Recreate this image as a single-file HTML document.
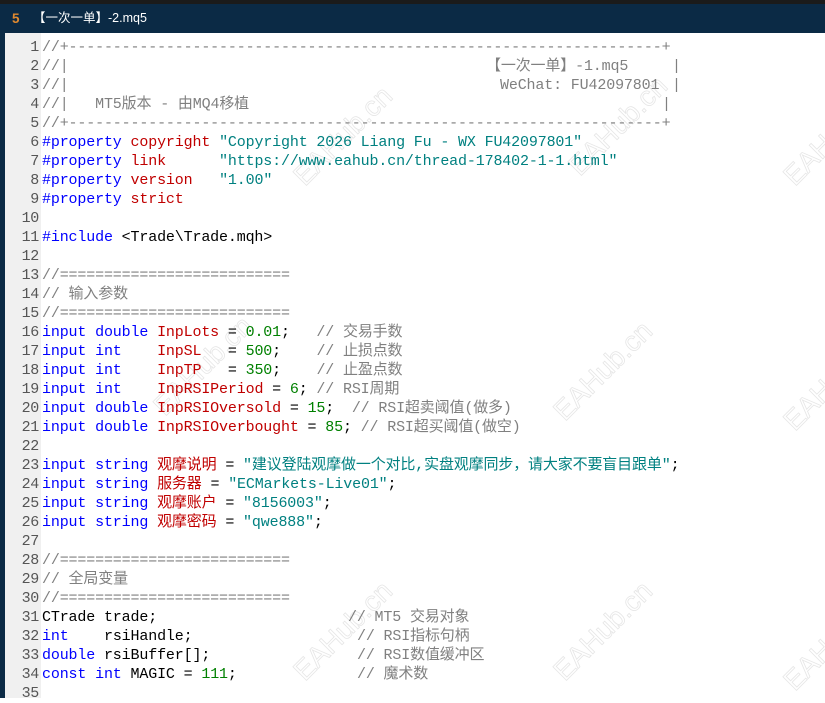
<!DOCTYPE html>
<html><head><meta charset="utf-8"><style>
body{margin:0;width:825px;height:698px;overflow:hidden;background:#fff;position:relative;font-family:"Liberation Mono","Noto Sans CJK SC",monospace;}
#top{position:absolute;left:0;top:0;width:825px;height:4px;background:#1b1b1b}
#title{position:absolute;left:0;top:4px;width:825px;height:29px;background:#0b2a45;color:#fff;font:12.5px "Liberation Sans","Noto Sans CJK SC",sans-serif;line-height:29px}
#title b{color:#e0892f;position:absolute;left:12px;font-size:13.5px}
#title span{position:absolute;left:33px}
#side{position:absolute;left:0;top:33px;width:5px;height:665px;background:#0b2a45}
#gut{position:absolute;left:5px;top:33px;width:36px;height:665px;background:#f0f0f0}
.l{position:absolute;left:0;height:19px;line-height:19px;font-size:15px;letter-spacing:-0.15px;white-space:pre;width:825px}
.n{position:absolute;left:5px;width:34px;text-align:right;color:#555;letter-spacing:-0.3px}
.c{position:absolute;left:42px}
.a{position:absolute}
.cm{color:#808080}.k{color:#0000ff}.r{color:#c00000}.g{color:#008000}.s{color:#008080}
.wm{position:absolute;color:transparent;-webkit-text-stroke:0.8px #e6e6e6;font:28px "Liberation Sans",sans-serif;transform:rotate(-45deg);white-space:nowrap}
</style></head><body>
<div id="top"></div>
<div id="title"><b>5</b><span>【一次一单】-2.mq5</span></div>
<div id="side"></div><div id="gut"></div>
<div class="wm" style="left:280px;top:120px">EAHub.cn</div>
<div class="wm" style="left:555px;top:110px">EAHub.cn</div>
<div class="wm" style="left:770px;top:120px">EAHub.cn</div>
<div class="wm" style="left:140px;top:350px">EAHub.cn</div>
<div class="wm" style="left:540px;top:355px">EAHub.cn</div>
<div class="wm" style="left:770px;top:365px">EAHub.cn</div>
<div class="wm" style="left:280px;top:615px">EAHub.cn</div>
<div class="wm" style="left:540px;top:615px">EAHub.cn</div>
<div class="wm" style="left:770px;top:625px">EAHub.cn</div>

<div class="l" style="top:38px"><span class="n">1</span><span class="c cm">//+-------------------------------------------------------------------+</span></div>
<div class="l" style="top:57px"><span class="n">2</span><span class="c cm">//|</span><span class="a cm" style="left:486px">【一次一单】-1.mq5</span><span class="a cm" style="left:672px">|</span></div>
<div class="l" style="top:76px"><span class="n">3</span><span class="c cm">//|</span><span class="a cm" style="left:500px">WeChat: FU42097801</span><span class="a cm" style="left:672px">|</span></div>
<div class="l" style="top:95px"><span class="n">4</span><span class="c cm">//|   MT5版本 - 由MQ4移植</span><span class="a cm" style="left:662px">|</span></div>
<div class="l" style="top:114px"><span class="n">5</span><span class="c cm">//+-------------------------------------------------------------------+</span></div>
<div class="l" style="top:133px"><span class="n">6</span><span class="c"><span class="k">#property</span> <span class="r">copyright</span> <span class="s">"Copyright 2026 Liang Fu - WX FU42097801"</span></span></div>
<div class="l" style="top:152px"><span class="n">7</span><span class="c"><span class="k">#property</span> <span class="r">link</span>      <span class="s">"https://www.eahub.cn/thread-178402-1-1.html"</span></span></div>
<div class="l" style="top:171px"><span class="n">8</span><span class="c"><span class="k">#property</span> <span class="r">version</span>   <span class="s">"1.00"</span></span></div>
<div class="l" style="top:190px"><span class="n">9</span><span class="c"><span class="k">#property</span> <span class="r">strict</span></span></div>
<div class="l" style="top:209px"><span class="n">10</span></div>
<div class="l" style="top:228px"><span class="n">11</span><span class="c"><span class="k">#include</span> &lt;Trade\Trade.mqh&gt;</span></div>
<div class="l" style="top:247px"><span class="n">12</span></div>
<div class="l" style="top:266px"><span class="n">13</span><span class="c cm">//==========================</span></div>
<div class="l" style="top:285px"><span class="n">14</span><span class="c cm">// 输入参数</span></div>
<div class="l" style="top:304px"><span class="n">15</span><span class="c cm">//==========================</span></div>
<div class="l" style="top:323px"><span class="n">16</span><span class="c"><span class="k">input double</span> <span class="r">InpLots</span> = <span class="g">0.01</span>;   <span class="cm">// 交易手数</span></span></div>
<div class="l" style="top:342px"><span class="n">17</span><span class="c"><span class="k">input int</span>    <span class="r">InpSL</span>   = <span class="g">500</span>;    <span class="cm">// 止损点数</span></span></div>
<div class="l" style="top:361px"><span class="n">18</span><span class="c"><span class="k">input int</span>    <span class="r">InpTP</span>   = <span class="g">350</span>;    <span class="cm">// 止盈点数</span></span></div>
<div class="l" style="top:380px"><span class="n">19</span><span class="c"><span class="k">input int</span>    <span class="r">InpRSIPeriod</span> = <span class="g">6</span>; <span class="cm">// RSI周期</span></span></div>
<div class="l" style="top:399px"><span class="n">20</span><span class="c"><span class="k">input double</span> <span class="r">InpRSIOversold</span> = <span class="g">15</span>;  <span class="cm">// RSI超卖阈值(做多)</span></span></div>
<div class="l" style="top:418px"><span class="n">21</span><span class="c"><span class="k">input double</span> <span class="r">InpRSIOverbought</span> = <span class="g">85</span>; <span class="cm">// RSI超买阈值(做空)</span></span></div>
<div class="l" style="top:437px"><span class="n">22</span></div>
<div class="l" style="top:456px"><span class="n">23</span><span class="c"><span class="k">input string</span> <span class="r">观摩说明</span> = <span class="s">"建议登陆观摩做一个对比,实盘观摩同步，请大家不要盲目跟单"</span>;</span></div>
<div class="l" style="top:475px"><span class="n">24</span><span class="c"><span class="k">input string</span> <span class="r">服务器</span> = <span class="s">"ECMarkets-Live01"</span>;</span></div>
<div class="l" style="top:494px"><span class="n">25</span><span class="c"><span class="k">input string</span> <span class="r">观摩账户</span> = <span class="s">"8156003"</span>;</span></div>
<div class="l" style="top:513px"><span class="n">26</span><span class="c"><span class="k">input string</span> <span class="r">观摩密码</span> = <span class="s">"qwe888"</span>;</span></div>
<div class="l" style="top:532px"><span class="n">27</span></div>
<div class="l" style="top:551px"><span class="n">28</span><span class="c cm">//==========================</span></div>
<div class="l" style="top:570px"><span class="n">29</span><span class="c cm">// 全局变量</span></div>
<div class="l" style="top:589px"><span class="n">30</span><span class="c cm">//==========================</span></div>
<div class="l" style="top:608px"><span class="n">31</span><span class="c">CTrade trade;</span><span class="a cm" style="left:348px">// MT5 交易对象</span></div>
<div class="l" style="top:627px"><span class="n">32</span><span class="c"><span class="k">int</span>    rsiHandle;</span><span class="a cm" style="left:357px">// RSI指标句柄</span></div>
<div class="l" style="top:646px"><span class="n">33</span><span class="c"><span class="k">double</span> rsiBuffer[];</span><span class="a cm" style="left:357px">// RSI数值缓冲区</span></div>
<div class="l" style="top:665px"><span class="n">34</span><span class="c"><span class="k">const int</span> MAGIC = <span class="g">111</span>;</span><span class="a cm" style="left:357px">// 魔术数</span></div>
<div class="l" style="top:684px"><span class="n">35</span></div>
</body></html>
